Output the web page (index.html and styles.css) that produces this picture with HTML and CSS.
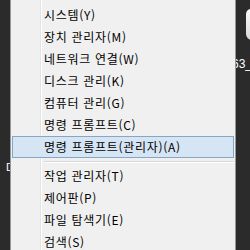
FILE: index.html
```html
<!DOCTYPE html>
<html lang="ko">
<head>
    <meta charset="UTF-8">
    <title>빠른 링크 메뉴</title>
    <link rel="stylesheet" href="styles.css">
</head>
<body>
    <div class="desktop">
        <div class="desk-icon"></div>
        <div class="desk-label">63_</div>
        <div class="desk-left">D</div>
    </div>

    <ul class="menu">
        <li class="item">이벤트 뷰어(V)</li>
        <li class="item">시스템(Y)</li>
        <li class="item">장치 관리자(M)</li>
        <li class="item">네트워크 연결(W)</li>
        <li class="item">디스크 관리(K)</li>
        <li class="item">컴퓨터 관리(G)</li>
        <li class="item">명령 프롬프트(C)</li>
        <li class="item active">명령 프롬프트(관리자)(A)</li>
        <li class="sep"></li>
        <li class="item">작업 관리자(T)</li>
        <li class="item">제어판(P)</li>
        <li class="item">파일 탐색기(E)</li>
        <li class="item">검색(S)</li>
        <li class="item">실행(R)</li>
    </ul>
</body>
</html>
```

FILE: styles.css
```css
body {
    margin: 0;
    width: 250px;
    height: 250px;
    overflow: hidden;
    position: relative;
    background-color: #2b2b2b;
    font-family: "Noto Sans CJK KR", "Noto Sans", sans-serif;
    font-size: 12px;
    color: #000;
}
.desk-icon {
    position: absolute;
    left: 246px;
    top: 9px;
    width: 14px;
    height: 31px;
    border-radius: 5px 0 0 6px;
    background: linear-gradient(to bottom, #fafafa, #d9d9d9);
}
.desk-label {
    position: absolute;
    left: 232px;
    top: 56px;
    color: #fff;
    font-family: "Liberation Sans", sans-serif;
    font-size: 12px;
    line-height: 16px;
}
.desk-left {
    position: absolute;
    left: 6px;
    top: 160px;
    color: #fff;
    font-family: "Liberation Sans", sans-serif;
    font-size: 11px;
    line-height: 14px;
}
.menu {
    position: absolute;
    left: 10px;
    top: -18px;
    width: 222px;
    margin: 0;
    padding: 0 1px;
    list-style: none;
    border: 1px solid #979797;
    border-top: none;
    background: linear-gradient(to right, #f0f0f0 29px, #e2e3e3 29px 30px, #fff 30px 31px, #f0f0f0 31px);
}
.item {
    height: 20px;
    line-height: 20px;
    padding-left: 31px;
    border: 1px solid transparent;
    white-space: nowrap;
    letter-spacing: 0.7px;
}
.item.active {
    background-color: #d6e5f4;
    border-color: #86a6c8;
}
.sep {
    height: 7px;
    margin-left: 32px;
    background: linear-gradient(to bottom, transparent 3px, #d7d7d7 3px 4px, #fff 4px 5px, transparent 5px);
}
```
